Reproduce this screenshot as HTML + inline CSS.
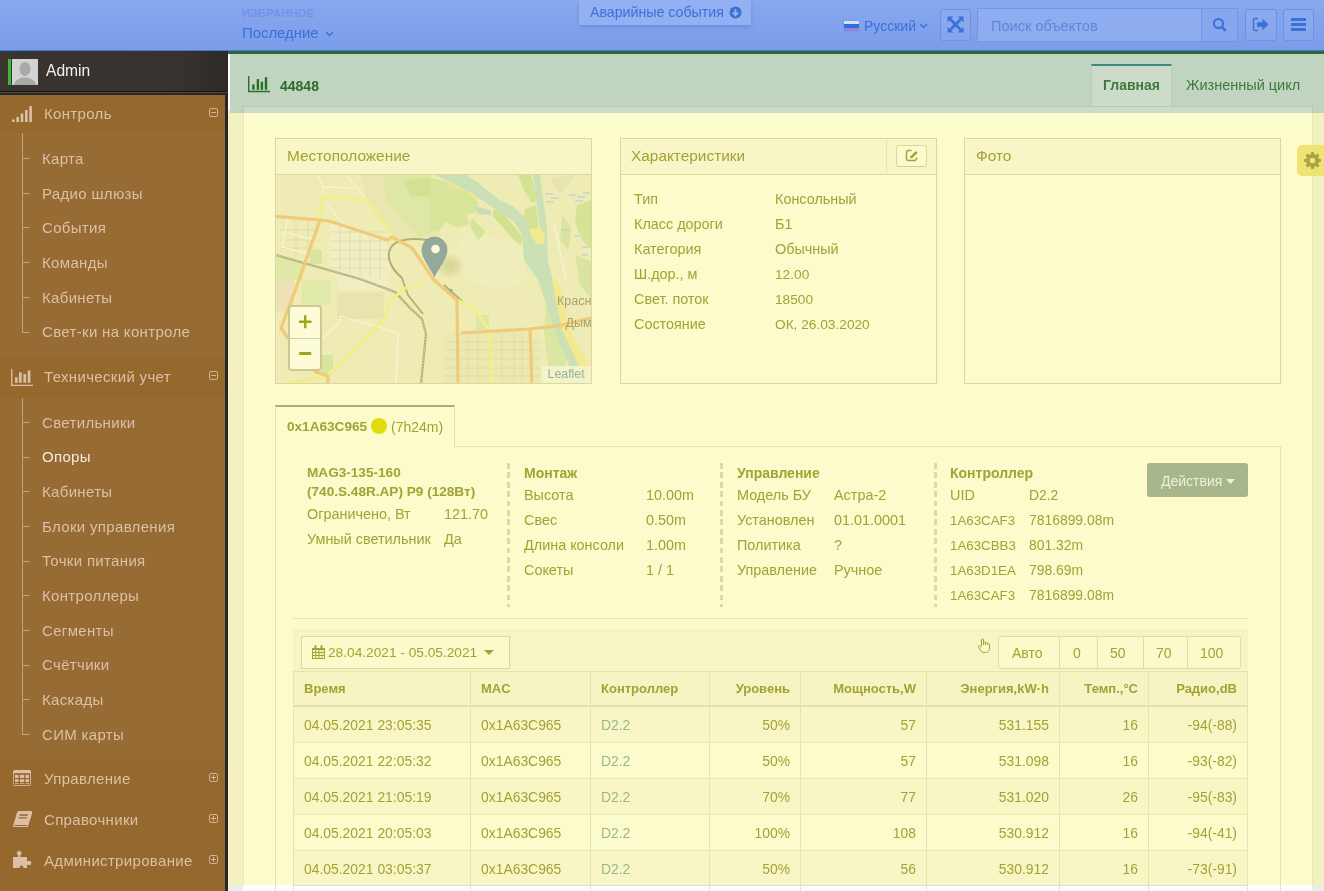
<!DOCTYPE html>
<html><head><meta charset="utf-8">
<style>
*{box-sizing:border-box;margin:0;padding:0}
html,body{width:1324px;height:891px;overflow:hidden}
body{-webkit-font-smoothing:antialiased;position:relative;font-family:"Liberation Sans",sans-serif;background:#ffffff;color:#a2a335}
.a{position:absolute;white-space:nowrap}
#wrap{position:absolute;left:0;top:0;width:1324px;height:891px;will-change:transform}
/* header */
#hdr{left:0;top:0;width:1324px;height:51px;background:linear-gradient(#88a8ef,#7b9de9);border-bottom:1px solid #3d7ee0}
.hbtn{border:1px solid #6c91e1;border-radius:3px;background:rgba(255,255,255,.06)}
/* sidebar */
#sb{left:0;top:51px;width:228px;height:840px;background:#2a2826}
.sbhead{left:0;width:225px;height:41px;background:#95682d;color:#dcc0a5;font-size:15.3px}
.sbsub{left:0;width:225px;background:#966b34}
.si{position:absolute;left:42px;color:#dcc0a5;font-size:15px;letter-spacing:.33px;white-space:nowrap}
.tk{position:absolute;left:22px;width:8px;height:1px;background:#c4a07e}
.vl{position:absolute;left:22px;width:1px;background:#c4a07e}
/* main */
.pnl{border:1px solid #dcd89c;background:#fcfbcb}
.ph{background:#f8f6c6;border-bottom:1px solid #dcd89c;height:36px}
.t14{font-size:14.4px}
.dl{top:463px;width:3px;height:144px;background:repeating-linear-gradient(#dcd9a5 0,#dcd9a5 5.8px,transparent 5.8px,transparent 9.4px)}
.th{font-size:13px;font-weight:bold;color:#a2a335}
.td{font-size:13.9px;color:#a2a335}
.lnk{color:#9cb590}
.bg14{font-size:14px;color:#a2a335}
</style></head><body><div id="wrap">

<!-- HEADER -->
<div id="hdr" class="a"></div>
<div class="a" style="left:242px;top:6px;font-size:11.6px;font-weight:bold;color:#6f95e5">ИЗБРАННОЕ</div>
<div class="a" style="left:242px;top:25px;font-size:14.9px;color:#3b70d9">Последние</div>
<svg class="a" style="left:325px;top:31px" width="9" height="6" viewBox="0 0 9 6"><path d="M1 1l3.5 3.5L8 1" stroke="#3b70d9" stroke-width="1.4" fill="none"/></svg>
<div class="a" style="left:579px;top:0;width:172px;height:25px;background:#93b0f2;box-shadow:0 2px 4px rgba(60,100,200,.35)"></div>
<div class="a" style="left:590px;top:4px;font-size:14.2px;color:#3b70d9">Аварийные события</div>
<svg class="a" style="left:728.5px;top:5.5px" width="13" height="13" viewBox="0 0 13 13"><circle cx="6.5" cy="6.5" r="6" fill="#3b70d9"/><path d="M6.5 3v6M3.8 6.5l2.7 2.7 2.7-2.7" stroke="#93b0f2" stroke-width="1.8" fill="none"/></svg>

<div class="a" style="left:843px;top:20px;width:17px;height:12px;border:1px solid #7a9ae2;background:linear-gradient(#d5e0fa 0,#d5e0fa 30%,#2c6de6 30%,#2c6de6 68%,#9b7fd2 68%)"></div>
<div class="a" style="left:864px;top:18px;font-size:14px;color:#3b70d9">Русский</div>
<svg class="a" style="left:919px;top:23px" width="9" height="6" viewBox="0 0 9 6"><path d="M1 1l3.5 3.5L8 1" stroke="#3b70d9" stroke-width="1.4" fill="none"/></svg>
<div class="a hbtn" style="left:940px;top:9px;width:31px;height:32px"></div>
<svg class="a" style="left:947px;top:16px" width="17" height="17" viewBox="0 0 16 16"><path d="M.5 .5h5.5L4.1 2.4 8 6.1l3.9-3.7L10 .5h5.5V6l-1.9-1.9L9.9 8l3.7 3.9 1.9-1.9v5.5H10l1.9-1.9L8 9.9l-3.9 3.7L6 15.5H.5V10l1.9 1.9L6.1 8 2.4 4.1 .5 6z" fill="#3b70d9"/></svg>
<div class="a" style="left:977px;top:8px;width:225px;height:34px;background:#8eadf1;border:1px solid #7397e4"></div>
<div class="a" style="left:991px;top:18px;font-size:14.6px;color:#5d86d9">Поиск объектов</div>
<div class="a" style="left:1201px;top:8px;width:37px;height:34px;background:#86a6ee;border:1px solid #7397e4"></div>
<svg class="a" style="left:1212px;top:17px" width="16" height="16" viewBox="0 0 16 16"><circle cx="6.5" cy="6.5" r="4.6" stroke="#3b70d9" stroke-width="2" fill="none"/><path d="M9.8 9.8l4 4" stroke="#3b70d9" stroke-width="2.4"/></svg>
<div class="a hbtn" style="left:1245px;top:9px;width:32px;height:32px"></div>
<svg class="a" style="left:1252px;top:17px" width="18" height="15" viewBox="0 0 18 15"><path d="M6 1.5H3.2C2.2 1.5 1.5 2.2 1.5 3.2v8.6c0 1 .7 1.7 1.7 1.7H6" stroke="#3b70d9" stroke-width="1.5" fill="none"/><path d="M5 5.3h5.5V1.8L16.5 7.5l-6 5.7V9.7H5z" fill="#3b70d9"/></svg>
<div class="a hbtn" style="left:1283px;top:9px;width:31px;height:32px"></div>
<div class="a" style="left:1291px;top:18px;width:15px;height:3px;background:#3b70d9"></div>
<div class="a" style="left:1291px;top:23px;width:15px;height:3px;background:#3b70d9"></div>
<div class="a" style="left:1291px;top:28px;width:15px;height:3px;background:#3b70d9"></div>

<!-- SIDEBAR -->
<div id="sb" class="a"></div>
<div class="a" style="left:0;top:51px;width:227px;height:40px;background:linear-gradient(90deg,#3a3430,#37322f 80%,#2e2a28)"></div>
<div class="a" style="left:0;top:91px;width:227px;height:1px;background:#121110"></div>
<div class="a" style="left:0;top:92px;width:227px;height:1px;background:#4f4e4d"></div>
<div class="a" style="left:8px;top:59px;width:3px;height:26px;background:#3cbb2c"></div>
<div class="a" style="left:12px;top:59px;width:26px;height:26px;background:#d3d3d3;overflow:hidden">
 <svg width="26" height="26" viewBox="0 0 26 26"><ellipse cx="13" cy="10" rx="5.5" ry="7" fill="#a9a9a9"/><path d="M2 26c1-5 5-6 8-7.5h6c3 1.5 7 2.5 8 7.5z" fill="#a9a9a9"/></svg>
</div>
<div class="a" style="left:46px;top:62px;font-size:15.6px;color:#f4f0ea">Admin</div>

<!-- Контроль -->
<div class="a sbhead" style="top:95px;height:38px"></div>
<svg class="a" style="left:12px;top:106px" width="20" height="17" viewBox="0 0 20 17"><rect x="0" y="13.5" width="2.6" height="2.5" fill="#dcc0a5"/><rect x="4.4" y="11" width="2.6" height="5" fill="#dcc0a5"/><rect x="8.7" y="7.5" width="2.6" height="8.5" fill="#dcc0a5"/><rect x="13" y="4" width="2.6" height="12" fill="#dcc0a5"/><rect x="17.3" y="0" width="2.6" height="16" fill="#dcc0a5"/></svg>
<div class="a" style="left:44px;top:105px;font-size:15px;letter-spacing:.33px;color:#dcc0a5">Контроль</div>
<svg class="a" style="left:209px;top:108px" width="9" height="9" viewBox="0 0 9 9"><rect x=".5" y=".5" width="8" height="8" rx="1.6" stroke="#d3b598" fill="none"/><path d="M2 4.5h5" stroke="#d3b598"/></svg>
<div class="a sbsub" style="top:133px;height:224px"></div>
<div class="vl" style="top:133px;height:199px"></div>
<div class="tk" style="top:158px"></div><div class="si" style="top:150px">Карта</div>
<div class="tk" style="top:193px"></div><div class="si" style="top:185px">Радио шлюзы</div>
<div class="tk" style="top:227px"></div><div class="si" style="top:219px">События</div>
<div class="tk" style="top:262px"></div><div class="si" style="top:254px">Команды</div>
<div class="tk" style="top:297px"></div><div class="si" style="top:289px">Кабинеты</div>
<div class="tk" style="top:332px"></div><div class="si" style="top:323px">Свет-ки на контроле</div>

<!-- Технический учет -->
<div class="a sbhead" style="top:357px;height:41px"></div>
<svg class="a" style="left:11px;top:368.5px" width="23" height="18" viewBox="0 0 23 18"><path d="M.7 0v16.3H22" stroke="#dcc0a5" stroke-width="1.3" fill="none"/><rect x="4" y="8.3" width="2.7" height="5.4" fill="#dcc0a5"/><rect x="8" y="3.3" width="2.7" height="10.4" fill="#dcc0a5"/><rect x="12.4" y="5.1" width="2.7" height="8.6" fill="#dcc0a5"/><rect x="16.7" y="1.5" width="2.7" height="12.2" fill="#dcc0a5"/></svg>
<div class="a" style="left:44px;top:368px;font-size:15px;letter-spacing:.33px;color:#dcc0a5">Технический учет</div>
<svg class="a" style="left:209px;top:371px" width="9" height="9" viewBox="0 0 9 9"><rect x=".5" y=".5" width="8" height="8" rx="1.6" stroke="#d3b598" fill="none"/><path d="M2 4.5h5" stroke="#d3b598"/></svg>
<div class="a sbsub" style="top:398px;height:361px"></div>
<div class="vl" style="top:398px;height:336px"></div>
<div class="tk" style="top:422px"></div><div class="si" style="top:414px">Светильники</div>
<div class="tk" style="top:457px"></div><div class="si" style="top:448px;color:#f9e9dc">Опоры</div>
<div class="tk" style="top:491px"></div><div class="si" style="top:483px">Кабинеты</div>
<div class="tk" style="top:526px"></div><div class="si" style="top:518px">Блоки управления</div>
<div class="tk" style="top:561px"></div><div class="si" style="top:552px">Точки питания</div>
<div class="tk" style="top:595px"></div><div class="si" style="top:587px">Контроллеры</div>
<div class="tk" style="top:630px"></div><div class="si" style="top:622px">Сегменты</div>
<div class="tk" style="top:665px"></div><div class="si" style="top:656px">Счётчики</div>
<div class="tk" style="top:699px"></div><div class="si" style="top:691px">Каскады</div>
<div class="tk" style="top:734px"></div><div class="si" style="top:726px">СИМ карты</div>

<!-- collapsed groups -->
<div class="a sbhead" style="top:759px;height:132px"></div>
<svg class="a" style="left:13px;top:770px" width="18" height="16" viewBox="0 0 18 16"><rect x="0" y="0" width="18" height="16" rx="2" fill="#dcc0a5"/><path d="M1.5 4.2h15M1.5 8.6h15M1.5 12.6h15M6.2 4.2v10.5M11.8 4.2v10.5" stroke="#95682d" stroke-width="1.3"/><rect x="1.4" y="4" width="15.2" height="10.6" fill="none" stroke="#95682d" stroke-width="1.2"/></svg>
<div class="a" style="left:44px;top:770px;font-size:15px;letter-spacing:.33px;color:#dcc0a5">Управление</div>
<svg class="a" style="left:209px;top:773px" width="9" height="9" viewBox="0 0 9 9"><rect x=".5" y=".5" width="8" height="8" rx="1.6" stroke="#d3b598" fill="none"/><path d="M2 4.5h5M4.5 2v5" stroke="#d3b598"/></svg>
<svg class="a" style="left:13px;top:811px" width="19" height="17" viewBox="0 0 19 17"><path d="M5 .5h12.5c.8 0 1.2.6 1 1.3L15 13.5H2.2c-1.2 0-2 .9-1.7 2h13.8L18.3 3" stroke="#dcc0a5" stroke-width="1.2" fill="none"/><path d="M5 .5h12.5c.8 0 1.2.6 1 1.3L15 13.5H2.2c-.8 0-1.4.2-1.9.7L4 1.5z" fill="#dcc0a5"/><path d="M6.3 4h8.5M5.6 6.8h8.5" stroke="#95682d" stroke-width="1.3"/></svg>
<div class="a" style="left:44px;top:811px;font-size:15px;letter-spacing:.33px;color:#dcc0a5">Справочники</div>
<svg class="a" style="left:209px;top:814px" width="9" height="9" viewBox="0 0 9 9"><rect x=".5" y=".5" width="8" height="8" rx="1.6" stroke="#d3b598" fill="none"/><path d="M2 4.5h5M4.5 2v5" stroke="#d3b598"/></svg>
<svg class="a" style="left:13px;top:851px" width="19" height="18" viewBox="0 0 19 18"><circle cx="6.2" cy="2.3" r="2.3" fill="#dcc0a5"/><circle cx="16" cy="12" r="2.3" fill="#dcc0a5"/><path d="M5.2 3.5h2V6H14v4.8h2v2.4h-2V17H10.5c0-1.6-.8-2.6-2-2.6s-2 1-2 2.6H0V6h5.2z" fill="#dcc0a5"/></svg>
<div class="a" style="left:44px;top:852px;font-size:15px;letter-spacing:.33px;color:#dcc0a5">Администрирование</div>
<svg class="a" style="left:209px;top:855px" width="9" height="9" viewBox="0 0 9 9"><rect x=".5" y=".5" width="8" height="8" rx="1.6" stroke="#d3b598" fill="none"/><path d="M2 4.5h5M4.5 2v5" stroke="#d3b598"/></svg>

<!-- MAIN -->
<div class="a" style="left:228px;top:51px;width:1096px;height:3px;background:#2f6b2f"></div>
<div class="a" style="left:228px;top:54px;width:2px;height:56px;background:#ffffff"></div>
<div class="a" style="left:228px;top:110px;width:2px;height:775px;background:#f4f1c1"></div>
<div class="a" style="left:230px;top:54px;width:1094px;height:59px;background:#c0d4c0"></div>
<div class="a" style="left:230px;top:113px;width:1094px;height:772px;background:#f3f1c0"></div>
<!-- inner panel -->
<div class="a" style="left:243px;top:106px;width:1070px;height:7px;background:#cbdccb;border:1px solid #b5cab5;border-bottom:none"></div>
<div class="a" style="left:243px;top:113px;width:1070px;height:772px;background:#fcfbcb;border-left:1px solid #e9e6b5;border-right:1px solid #e9e6b5"></div>

<!-- title -->
<svg class="a" style="left:248px;top:76px" width="22" height="17" viewBox="0 0 22 17"><path d="M.7 0v15.5H22" stroke="#2a6e2a" stroke-width="1.4" fill="none"/><rect x="4.2" y="8.4" width="2.4" height="5.4" fill="#2a6e2a"/><rect x="8.7" y="3" width="2.4" height="10.8" fill="#2a6e2a"/><rect x="12.7" y="5.7" width="2.4" height="8.1" fill="#2a6e2a"/><rect x="16.8" y="1.2" width="2.4" height="12.6" fill="#2a6e2a"/></svg>
<div class="a" style="left:280px;top:78px;font-size:14px;font-weight:bold;color:#2a6e2a">44848</div>
<div class="a" style="left:1091px;top:64px;width:81px;height:42px;background:#cddcca;border-top:2px solid #3f8a78;border-left:1px solid #b9cdb8;border-right:1px solid #b9cdb8"></div>
<div class="a" style="left:1103px;top:77px;font-size:14px;font-weight:bold;color:#3d7a3d">Главная</div>
<div class="a" style="left:1186px;top:77px;font-size:14.5px;color:#3d7a3d">Жизненный цикл</div>


<!-- PANELS -->
<div class="a pnl" style="left:275px;top:138px;width:317px;height:246px;overflow:hidden;background:#ece9b2">
 <div class="ph" style="position:absolute;left:0;top:0;width:315px"></div>
 <svg style="position:absolute;left:0;top:36px" width="315" height="208" viewBox="276 175 315 208">
  <rect x="270" y="170" width="330" height="220" fill="#eeebb5"/>
  <!-- lighter blocks -->
  <path d="M330 222 L386 240 L392 262 L386 290 L340 290 L330 260z" fill="#f1eec4"/>
  <path d="M392 175 L430 200 L440 235 L412 240 L392 236 L367 200 L360 175z" fill="#e9e6b0"/>
  <path d="M337 292 L384 292 L384 319 L337 319z" fill="#e7e4ad"/>
  <path d="M444 333 L538 330 L540 384 L444 384z" fill="#ebe8b0"/>
  <path d="M470 230 L520 245 L528 280 L500 290 L465 280 L455 250z" fill="#f0edbd"/>
  <path d="M275 280 L294 280 L294 311 L275 311z" fill="#ebe0b6"/>
  <!-- greens -->
  <path d="M384 175 L432 175 L433 232 L420 238 L398 215 L386 200z" fill="#dfe7a4"/>
  <path d="M404 180 L432 178 L432 197 L410 196z" fill="#d2e192"/>
  <path d="M430 178 L446 181 L472 195 L478 203 L476 212 L466 215 L470 224 L458 228 L446 222 L438 232 L430 230z" fill="#d8e59b"/>
  <path d="M493 210 L499 209 L522 236 L521 245 L514 240 L493 216z" fill="#d2e18f"/>
  <path d="M518 175 L531 175 L537 201 L532 203 L524 190z" fill="#d4e392"/>
  <path d="M525 209 L536 205 L539 230 L530 236 L524 222z" fill="#d4e392"/>
  <path d="M472 218 L486 232 L478 240 L470 226z" fill="#d6e498"/>
  <path d="M577 205 L592 200 L592 250 L582 240 L575 222z" fill="#d5e396"/><path d="M562 215 L572 228 L568 250 L560 240z" fill="#d9e59e"/><path d="M575 255 L592 262 L592 300 L580 285z" fill="#d9e59e"/><path d="M550 178 L575 175 L560 195z" fill="#e6e5b0"/>
  <path d="M548 285 L558 300 L568 350 L562 384 L550 384 L544 330z" fill="#dbe6a2"/>
  <path d="M302 280 L331 280 L331 305 L302 305z" fill="#e1e9a8"/>
  <path d="M276 257 L303 261 L303 280 L276 280z" fill="#e0e8a6"/>
  <path d="M310 250 L322 250 L322 264 L310 264z" fill="#d9e49e"/>
  <path d="M321 355 L333 355 L333 374 L321 374z" fill="#d8e59e"/>
  <path d="M476 315 L489 315 L489 330 L476 330z" fill="#dbe7a3"/>
  <!-- grids -->
  <g stroke="#ddd9a4" stroke-width="0.8" fill="none">
   <path d="M331 232h55M331 241h58M331 250h60M331 259h58M331 268h55M340 224v50M350 227v47M360 230v46M370 233v44M380 236v42"/>
   <path d="M444 342h96M444 350h96M444 359h96M444 368h96M444 376h96M468 333v51M478 333v51M502 333v51M514 333v51M522 333v51"/>
   <path d="M280 230h40M280 240h40M280 248h35M296 220v35M308 221v35"/>
  </g>
  <g stroke="#f7f4d6" stroke-width="1.3" fill="none">
   <path d="M318 175 L323 187 L323 196M346 175 L367 200M323 187 L355 188M327 205 L344 224"/>
   <path d="M288 218 L282 247 L307 253M288 233 L311 239"/>
   <path d="M340 316 L340 322 L323 338M340 316 L398 333 L396 384"/>
   <path d="M554 223 L566 280M556 280 L575 384"/>
  </g>
  <!-- river -->
<path d="M435 175 L466 175 L477 182 L499 199.5 L514 207 L528 221 L530 232 L536 243 L544 244 L539 222 L533 175 L540 175 L547 228 L548 262 L553 280 L560 311 L567 332 L582 360 L588 384 L573 384 L569 365 L558 340 L538 280 L524 260 L522 234 L513 221 L497 210 L481 199.5 L448 181z" fill="#cce0b5"/>
  <path d="M530 229 L540 228 L545 236 L544 244 L537 243 L531 236z" fill="#f4ea8d"/>
  <path d="M552 280 L558 280 L570 330 L586 362 L590 384 L584 384 L578 364 L562 330z" fill="#f3e98e"/>
  <path d="M447 181 L462 188 L466 192 L450 186z" fill="#f1e68b"/>
  <path d="M469 191 L478 198 L476 200 L468 194z" fill="#f1e68b"/>
  <path d="M474 206 L490 210 L492 215 L478 214z" fill="#c9ddba"/>
  <g stroke="#afcdd6" stroke-width="1.2"><path d="M545 194h8M551 198h8M569 195h7M577 197h8M583 193h7M546 202h8M575 201h8M561 230h8M574 236h6M582 247h7M582 255h6"/></g>
  <!-- railway -->
  <g fill="none">
   <path d="M276 255 L360 279 L395 292 L410 308 L422 319 L426 334 L421 384" stroke="#b3af73" stroke-width="2.2"/>
   <path d="M276 255 L360 279 L395 292 L410 308 L422 319 L426 334 L421 384" stroke="#eeebc0" stroke-width="0.7" stroke-dasharray="1.5 1.5"/>
   <path d="M402 278 C390 268 385 255 392 246 C398 239 412 238 428 240" stroke="#b3af73" stroke-width="2"/>
   <path d="M402 278 L404 284 L408 295 L423 314" stroke="#b3af73" stroke-width="1.8"/>
   <path d="M444 285 L463 302" stroke="#b3af73" stroke-width="1.8"/>
  </g>
  <rect x="449" y="289" width="3.5" height="3.5" fill="#a5a88a"/>
  <!-- yellow roads -->
  <g stroke="#f2ee8e" stroke-width="3.2" fill="none" stroke-linejoin="round">
   <path d="M320 218 L323 196 L367 200 L393 235"/>
   <path d="M426 280 L413 288 L405 288 L391 300 L384 319 L327 376 L285 384"/>
   <path d="M457 300 L472 307 L490 331 L492 384"/>
  </g>
  <!-- orange roads -->
  <g stroke="#efca78" stroke-width="3.2" fill="none" stroke-linejoin="round">
   <path d="M270 216 L320 220 L329 221 L387 240 L392 237 L412 248 L434 280 L457 300 L458 384"/>
   <path d="M320 220 L299 280 L281 328 L288 338 L316 372 L328 376 L328 386"/>
   <path d="M461 333 L529 329 L558 326 L595 317"/>
   <path d="M530 330 L532 386"/>
  </g>
  <!-- labels -->
  <text x="557" y="304.5" font-family="Liberation Sans" font-size="12.5" fill="#a9a26a">Красн</text>
  <text x="565.5" y="327" font-family="Liberation Sans" font-size="12.5" fill="#a9a26a">Дым</text>
  <!-- pin shadow -->
  <defs><radialGradient id="sh" cx="0.5" cy="0.5" r="0.5"><stop offset="0" stop-color="#c2be78" stop-opacity=".55"/><stop offset="1" stop-color="#b8b46a" stop-opacity="0"/></radialGradient></defs>
  <ellipse cx="450" cy="266" rx="15" ry="13" fill="url(#sh)"/>
  <!-- pin -->
  <path d="M434.5 276.5 C431 268 422 259 422 249.5 A12.5 12.5 0 0 1 447 249.5 C447 259 438 268 434.5 276.5z" fill="#93aa9b" stroke="#85a08f" stroke-width=".8"/>
  <circle cx="435.5" cy="249" r="4.3" fill="#fcfbd6"/>
  <!-- zoom control -->
  <rect x="289" y="306" width="32" height="64" rx="3" fill="#fdfcd9" stroke="#cdc993" stroke-width="2"/>
  <path d="M290 338.5h30" stroke="#d6d29c" stroke-width="1"/>
  <path d="M299 321.7h12.5M305.2 315.2v13" stroke="#a3a31b" stroke-width="2.5"/>
  <path d="M299.2 353.5h12" stroke="#a3a31b" stroke-width="3"/>
  <!-- attribution -->
  <rect x="542" y="366" width="50" height="18" fill="#f5f5d0" opacity=".85"/>
  <text x="547.5" y="378" font-family="Liberation Sans" font-size="12.4" fill="#9eb291">Leaflet</text>
 </svg>
 <div class="a" style="left:11px;top:8px;font-size:15.4px;color:#a2a335">Местоположение</div>
</div>

<div class="a pnl" style="left:620px;top:138px;width:317px;height:246px">
 <div class="ph" style="position:absolute;left:0;top:0;width:315px"></div>
 <div class="a" style="left:265px;top:0;width:1px;height:36px;background:#e9e5b0"></div>
 <div class="a" style="left:275px;top:6px;width:31px;height:22px;border:1px solid #dcd89c;border-bottom-color:#d6d294;border-radius:3px;background:#fcfbd0"></div>
 <svg class="a" style="left:284px;top:10px" width="14" height="13" viewBox="0 0 14 13"><path d="M6.5 1.5H3.2C2.2 1.5 1.5 2.2 1.5 3.2v6.6c0 1 .7 1.7 1.7 1.7h6.6c1 0 1.7-.7 1.7-1.7V8.5" stroke="#a2a335" stroke-width="1.5" fill="none"/><path d="M5 9.5l.5-2.3L10.8 1.9l1.9 1.9-5.4 5.3z" fill="#a2a335"/></svg>
 <div class="a" style="left:10px;top:8px;font-size:15.4px;color:#a2a335">Характеристики</div>
 <div class="a t14" style="left:13px;top:48px;line-height:25px">Тип<br>Класс дороги<br>Категория<br>Ш.дор., м<br>Свет. поток<br>Состояние</div>
 <div class="a t14" style="left:154px;top:48px;line-height:25px">Консольный<br>Б1<br>Обычный<br><span style="font-size:13.7px">12.00<br>18500<br>ОК, 26.03.2020</span></div>
</div>

<div class="a pnl" style="left:964px;top:138px;width:317px;height:246px">
 <div class="ph" style="position:absolute;left:0;top:0;width:315px"></div>
 <div class="a" style="left:11px;top:8px;font-size:15.4px;color:#a2a335">Фото</div>
</div>
<!-- gear tab -->
<div class="a" style="left:1297px;top:145px;width:30px;height:31px;background:#efe374;border-radius:5px 0 0 5px"></div>
<svg class="a" style="left:1304px;top:152px" width="17" height="17" viewBox="0 0 18 18"><path d="M7.6 0h2.8l.4 2.4 1.5.7 2-1.4 2 2-1.4 2 .7 1.5 2.4.4v2.8l-2.4.4-.7 1.5 1.4 2-2 2-2-1.4-1.5.7-.4 2.4H7.6l-.4-2.4-1.5-.7-2 1.4-2-2 1.4-2-.7-1.5L0 10.4V7.6l2.4-.4.7-1.5-1.4-2 2-2 2 1.4 1.5-.7z" fill="#a5a543"/><circle cx="9" cy="9" r="3" fill="#efe374"/></svg>


<!-- TAB + DETAILS -->
<div class="a" style="left:275px;top:405px;width:180px;height:42px;background:#fcfbcb;border-top:2px solid #aab06f;border-left:1px solid #e6e2ac;border-right:1px solid #e6e2ac"></div>
<div class="a" style="left:454px;top:446px;width:827px;height:1px;background:#e6e2ac"></div>
<div class="a" style="left:275px;top:447px;width:1px;height:438px;background:#e6e2ac"></div>
<div class="a" style="left:1280px;top:446px;width:1px;height:439px;background:#e6e2ac"></div>
<div class="a" style="left:287px;top:419px;font-size:13.6px;font-weight:bold;color:#a2a335">0x1A63C965</div>
<div class="a" style="left:371px;top:418px;width:16px;height:16px;border-radius:50%;background:#e0de0a"></div>
<div class="a" style="left:391px;top:419px;font-size:14px;color:#a2a335">(7h24m)</div>

<div class="a" style="left:307px;top:463px;font-size:13.6px;font-weight:bold;line-height:19px">MAG3-135-160<br>(740.S.48R.AP) P9 (128Вт)</div>
<div class="a t14" style="left:307px;top:502px;line-height:25px">Ограничено, Вт<br>Умный светильник</div>
<div class="a t14" style="left:444px;top:502px;line-height:25px">121.70<br>Да</div>

<div class="a dl" style="left:507px"></div>
<div class="a dl" style="left:720px"></div>
<div class="a dl" style="left:934px"></div>

<div class="a" style="left:524px;top:465px;font-size:14px;font-weight:bold">Монтаж</div>
<div class="a t14" style="left:524px;top:483px;line-height:25px">Высота<br>Свес<br>Длина консоли<br>Сокеты</div>
<div class="a t14" style="left:646px;top:483px;line-height:25px">10.00m<br>0.50m<br>1.00m<br>1 / 1</div>

<div class="a" style="left:737px;top:465px;font-size:14px;font-weight:bold">Управление</div>
<div class="a t14" style="left:737px;top:483px;line-height:25px">Модель БУ<br>Установлен<br>Политика<br>Управление</div>
<div class="a t14" style="left:834px;top:483px;line-height:25px">Астра-2<br>01.01.0001<br>?<br>Ручное</div>

<div class="a" style="left:950px;top:465px;font-size:14px;font-weight:bold">Контроллер</div>
<div class="a t14" style="left:950px;top:483px;line-height:25px">UID<br><span style="font-size:13.3px">1A63CAF3<br>1A63CBB3<br>1A63D1EA<br>1A63CAF3</span></div>
<div class="a t14" style="left:1029px;top:483px;line-height:25px;font-size:13.9px">D2.2<br>7816899.08m<br>801.32m<br>798.69m<br>7816899.08m</div>

<div class="a" style="left:1147px;top:463px;width:101px;height:34px;background:#a8b68b;border-radius:3px"></div>
<div class="a" style="left:1161px;top:473px;font-size:14px;color:#eef1d8">Действия</div>
<svg class="a" style="left:1226px;top:479px" width="9" height="5" viewBox="0 0 9 5"><path d="M0 0h9L4.5 5z" fill="#eef1d8"/></svg>

<div class="a" style="left:293px;top:618px;width:955px;height:1px;background:#e9e6b3"></div>
<div class="a" style="left:293px;top:629px;width:955px;height:42px;background:#f7f5c4"></div>
<div class="a" style="left:301px;top:636px;width:209px;height:33px;background:#fbfacb;border:1px solid #dcd8a0;border-radius:0"></div>
<svg class="a" style="left:312px;top:645px" width="13" height="14" viewBox="0 0 13 14"><path d="M0 3h13v11H0z" fill="#a2a335"/><g fill="#fbfacb"><rect x="1" y="5" width="2.2" height="2"/><rect x="4.2" y="5" width="2.2" height="2"/><rect x="7.4" y="5" width="2.2" height="2"/><rect x="10.2" y="5" width="1.8" height="2"/><rect x="1" y="8" width="2.2" height="2"/><rect x="4.2" y="8" width="2.2" height="2"/><rect x="7.4" y="8" width="2.2" height="2"/><rect x="10.2" y="8" width="1.8" height="2"/><rect x="1" y="11" width="2.2" height="2"/><rect x="4.2" y="11" width="2.2" height="2"/><rect x="7.4" y="11" width="2.2" height="2"/><rect x="10.2" y="11" width="1.8" height="2"/></g><rect x="2.5" y="0" width="2" height="4" rx="1" fill="#a2a335"/><rect x="8.5" y="0" width="2" height="4" rx="1" fill="#a2a335"/></svg>
<div class="a" style="left:328px;top:645px;font-size:13.7px">28.04.2021 - 05.05.2021</div>
<svg class="a" style="left:484px;top:650px" width="10" height="5" viewBox="0 0 10 5"><path d="M0 0h10L5 5z" fill="#a2a335"/></svg>
<svg class="a" style="left:977px;top:638px" width="14" height="15" viewBox="0 0 14 15"><path d="M4.5 8V2a1 1 0 0 1 2 0v5M6.5 6.5V5a1 1 0 0 1 2 0v2M8.5 6V5.5a1 1 0 0 1 2 0V7M10.5 6.5a1 1 0 0 1 2 0v3.5c0 2.5-1.5 4.5-4 4.5H7c-1.5 0-2.5-1-3.5-2.5L1.5 9a1 1 0 0 1 1.7-1L4.5 9.5" stroke="#a2a335" stroke-width="1" fill="#fcfbcb"/></svg>
<div class="a" style="left:998px;top:636px;width:243px;height:33px;background:#fbfacb;border:1px solid #e0dca4;border-radius:3px"></div>
<div class="a" style="left:1059px;top:637px;width:1px;height:31px;background:#e0dca4"></div>
<div class="a" style="left:1097px;top:637px;width:1px;height:31px;background:#e0dca4"></div>
<div class="a" style="left:1143px;top:637px;width:1px;height:31px;background:#e0dca4"></div>
<div class="a" style="left:1187px;top:637px;width:1px;height:31px;background:#e0dca4"></div>
<div class="a bg14" style="left:1012px;top:645px">Авто</div>
<div class="a bg14" style="left:1073px;top:645px">0</div>
<div class="a bg14" style="left:1110px;top:645px">50</div>
<div class="a bg14" style="left:1156px;top:645px">70</div>
<div class="a bg14" style="left:1200px;top:645px">100</div>

<!-- TABLE -->
<div class="a" style="left:293px;top:671px;width:955px;height:36px;background:#f6f4c2;border-top:1px solid #e6e3ae;border-bottom:2px solid #e4e0aa"></div>
<div class="a" style="left:293px;top:707px;width:955px;height:36px;background:#f8f6c5;border-bottom:1px solid #e9e6b2"></div>
<div class="a" style="left:293px;top:743px;width:955px;height:36px;background:#fcfbcb;border-bottom:1px solid #e9e6b2"></div>
<div class="a" style="left:293px;top:779px;width:955px;height:36px;background:#f8f6c5;border-bottom:1px solid #e9e6b2"></div>
<div class="a" style="left:293px;top:815px;width:955px;height:36px;background:#fcfbcb;border-bottom:1px solid #e9e6b2"></div>
<div class="a" style="left:293px;top:851px;width:955px;height:36px;background:#f8f6c5;border-bottom:1px solid #e9e6b2"></div>
<div class="a" style="left:293px;top:671px;width:1px;height:214px;background:#e6e3ae"></div>
<div class="a" style="left:470px;top:671px;width:1px;height:214px;background:#e6e3ae"></div>
<div class="a" style="left:590px;top:671px;width:1px;height:214px;background:#e6e3ae"></div>
<div class="a" style="left:709px;top:671px;width:1px;height:214px;background:#e6e3ae"></div>
<div class="a" style="left:800px;top:671px;width:1px;height:214px;background:#e6e3ae"></div>
<div class="a" style="left:926px;top:671px;width:1px;height:214px;background:#e6e3ae"></div>
<div class="a" style="left:1059px;top:671px;width:1px;height:214px;background:#e6e3ae"></div>
<div class="a" style="left:1148px;top:671px;width:1px;height:214px;background:#e6e3ae"></div>
<div class="a" style="left:1247px;top:671px;width:1px;height:214px;background:#e6e3ae"></div>
<div class="a th" style="left:304px;top:681px">Время</div>
<div class="a th" style="left:481px;top:681px">MAC</div>
<div class="a th" style="left:601px;top:681px">Контроллер</div>
<div class="a th" style="right:534px;top:681px">Уровень</div>
<div class="a th" style="right:408px;top:681px">Мощность,W</div>
<div class="a th" style="right:275px;top:681px">Энергия,kW·h</div>
<div class="a th" style="right:186px;top:681px">Темп.,°C</div>
<div class="a th" style="right:87px;top:681px">Радио,dB</div>
<div class="a td" style="left:304px;top:717px">04.05.2021 23:05:35</div>
<div class="a td" style="left:481px;top:717px">0x1A63C965</div>
<div class="a td lnk" style="left:601px;top:717px">D2.2</div>
<div class="a td" style="right:534px;top:717px">50%</div>
<div class="a td" style="right:408px;top:717px">57</div>
<div class="a td" style="right:275px;top:717px">531.155</div>
<div class="a td" style="right:186px;top:717px">16</div>
<div class="a td" style="right:87px;top:717px">-94(-88)</div>
<div class="a td" style="left:304px;top:753px">04.05.2021 22:05:32</div>
<div class="a td" style="left:481px;top:753px">0x1A63C965</div>
<div class="a td lnk" style="left:601px;top:753px">D2.2</div>
<div class="a td" style="right:534px;top:753px">50%</div>
<div class="a td" style="right:408px;top:753px">57</div>
<div class="a td" style="right:275px;top:753px">531.098</div>
<div class="a td" style="right:186px;top:753px">16</div>
<div class="a td" style="right:87px;top:753px">-93(-82)</div>
<div class="a td" style="left:304px;top:789px">04.05.2021 21:05:19</div>
<div class="a td" style="left:481px;top:789px">0x1A63C965</div>
<div class="a td lnk" style="left:601px;top:789px">D2.2</div>
<div class="a td" style="right:534px;top:789px">70%</div>
<div class="a td" style="right:408px;top:789px">77</div>
<div class="a td" style="right:275px;top:789px">531.020</div>
<div class="a td" style="right:186px;top:789px">26</div>
<div class="a td" style="right:87px;top:789px">-95(-83)</div>
<div class="a td" style="left:304px;top:825px">04.05.2021 20:05:03</div>
<div class="a td" style="left:481px;top:825px">0x1A63C965</div>
<div class="a td lnk" style="left:601px;top:825px">D2.2</div>
<div class="a td" style="right:534px;top:825px">100%</div>
<div class="a td" style="right:408px;top:825px">108</div>
<div class="a td" style="right:275px;top:825px">530.912</div>
<div class="a td" style="right:186px;top:825px">16</div>
<div class="a td" style="right:87px;top:825px">-94(-41)</div>
<div class="a td" style="left:304px;top:861px">04.05.2021 03:05:37</div>
<div class="a td" style="left:481px;top:861px">0x1A63C965</div>
<div class="a td lnk" style="left:601px;top:861px">D2.2</div>
<div class="a td" style="right:534px;top:861px">50%</div>
<div class="a td" style="right:408px;top:861px">56</div>
<div class="a td" style="right:275px;top:861px">530.912</div>
<div class="a td" style="right:186px;top:861px">16</div>
<div class="a td" style="right:87px;top:861px">-73(-91)</div>
<div class="a" style="left:228px;top:885px;width:1096px;height:6px;background:#fff"></div>
<div class="a" style="left:228px;top:885px;width:15px;height:6px;background:#ececec"></div>
<div class="a" style="left:293px;top:885px;width:955px;height:1px;background:#dcdcdc"></div>
<div class="a" style="left:275px;top:885px;width:1px;height:6px;background:#dde0e6"></div>
<div class="a" style="left:1280px;top:885px;width:1px;height:6px;background:#dde0e6"></div>
<div class="a" style="left:1312px;top:885px;width:12px;height:6px;background:#ececec"></div>
<div class="a" style="left:293px;top:885px;width:1px;height:6px;background:#dde0e6"></div>
<div class="a" style="left:470px;top:885px;width:1px;height:6px;background:#dde0e6"></div>
<div class="a" style="left:590px;top:885px;width:1px;height:6px;background:#dde0e6"></div>
<div class="a" style="left:709px;top:885px;width:1px;height:6px;background:#dde0e6"></div>
<div class="a" style="left:800px;top:885px;width:1px;height:6px;background:#dde0e6"></div>
<div class="a" style="left:926px;top:885px;width:1px;height:6px;background:#dde0e6"></div>
<div class="a" style="left:1059px;top:885px;width:1px;height:6px;background:#dde0e6"></div>
<div class="a" style="left:1148px;top:885px;width:1px;height:6px;background:#dde0e6"></div>
<div class="a" style="left:1247px;top:885px;width:1px;height:6px;background:#dde0e6"></div>
</div></body></html>
